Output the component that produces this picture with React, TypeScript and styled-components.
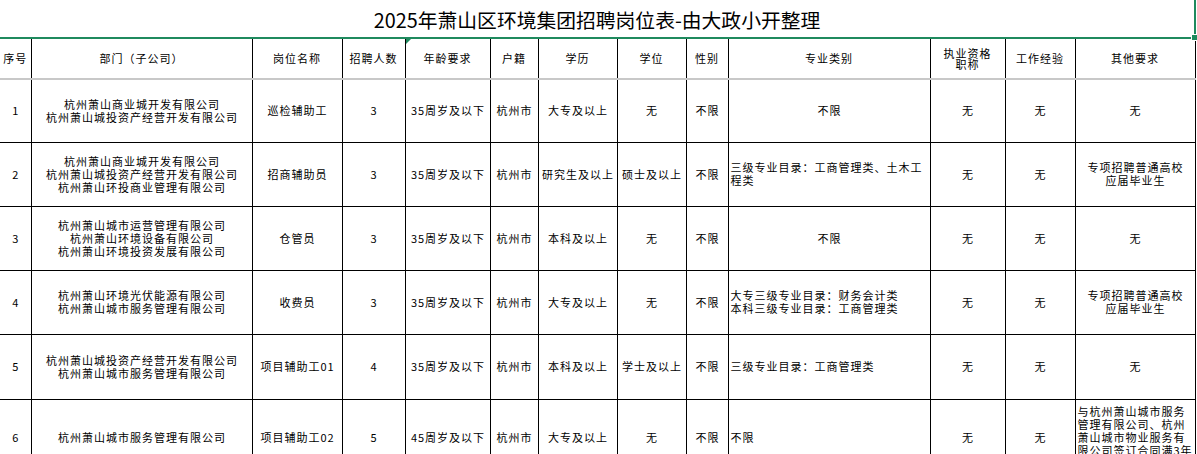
import React, { FC } from 'react';
import styled, { createGlobalStyle } from 'styled-components';

const green = '#1f8a5e';
const gridLine = '#000000';
const frozenLine = '#c8c8c8';

const GlobalStyle = createGlobalStyle`
  html, body {
    margin: 0;
    padding: 0;
    background: #ffffff;
    overflow: hidden;
  }
  body {
    font-family: "Noto Sans CJK SC", "Noto Sans", sans-serif;
    color: #000000;
  }
`;

const Sheet = styled.div`
  width: 1197px;
  height: 454px;
  overflow: hidden;
`;

const Table = styled.table`
  border-collapse: collapse;
  table-layout: fixed;
  width: 1197px;
`;

const Col = styled.col<{ $width: number }>`
  width: ${(p) => p.$width}px;
`;

const TitleCell = styled.td`
  position: relative;
  height: 34px;
  padding: 3px 0 0;
  border-bottom: 2px solid ${green};
  border-right: 2px solid ${green};
  font-size: 19.8px;
  line-height: 24px;
  text-align: center;
  vertical-align: middle;
  white-space: nowrap;
`;

const Handle = styled.span`
  position: absolute;
  right: -4px;
  bottom: -4px;
  width: 5px;
  height: 5px;
  background: ${green};
  border: 1px solid #ffffff;
`;

const HeadCell = styled.th`
  position: relative;
  height: 39px;
  padding: 0 1px;
  border-right: 1px solid ${gridLine};
  border-bottom: 2px solid ${frozenLine};
  font-size: 11px;
  font-weight: normal;
  letter-spacing: 1px;
  line-height: 11px;
  text-align: center;
  vertical-align: middle;
`;

const Marker = styled.span`
  position: absolute;
  left: 0;
  top: 0;
  width: 0;
  height: 0;
  border-top: 5px solid ${green};
  border-right: 5px solid transparent;
`;

const Cell = styled.td<{ $left?: boolean }>`
  padding: 0 1px 0 2px;
  border-right: 1px solid ${gridLine};
  border-bottom: 1px solid ${gridLine};
  font-size: 11px;
  letter-spacing: 1px;
  line-height: 13px;
  text-align: ${(p) => (p.$left ? 'left' : 'center')};
  vertical-align: middle;
  white-space: nowrap;
  overflow: hidden;
`;

const Row = styled.tr<{ $height: number }>`
  height: ${(p) => p.$height}px;
`;

const Blank = styled.td``;

const widths = [31, 221, 90, 63, 85, 48, 79, 69, 42, 202, 75, 70, 120, 2];

const headers = [
  ['序号'],
  ['部门（子公司）'],
  ['岗位名称'],
  ['招聘人数'],
  ['年龄要求'],
  ['户籍'],
  ['学历'],
  ['学位'],
  ['性别'],
  ['专业类别'],
  ['执业资格', '职称'],
  ['工作经验'],
  ['其他要求'],
];

interface IJob {
  no: number;
  companies: string[];
  title: string;
  count: number;
  age: string;
  degreeLevel: string;
  degree: string;
  major: string[];
  majorLeft: boolean;
  other: string[];
  otherLeft?: boolean;
  height: number;
}

const jobs: IJob[] = [
  {
    no: 1,
    companies: ['杭州萧山商业城开发有限公司', '杭州萧山城投资产经营开发有限公司'],
    title: '巡检辅助工',
    count: 3,
    age: '35周岁及以下',
    degreeLevel: '大专及以上',
    degree: '无',
    major: ['不限'],
    majorLeft: false,
    other: ['无'],
    height: 63,
  },
  {
    no: 2,
    companies: [
      '杭州萧山商业城开发有限公司',
      '杭州萧山城投资产经营开发有限公司',
      '杭州萧山环投商业管理有限公司',
    ],
    title: '招商辅助员',
    count: 3,
    age: '35周岁及以下',
    degreeLevel: '研究生及以上',
    degree: '硕士及以上',
    major: ['三级专业目录：工商管理类、土木工', '程类'],
    majorLeft: true,
    other: ['专项招聘普通高校', '应届毕业生'],
    height: 64,
  },
  {
    no: 3,
    companies: [
      '杭州萧山城市运营管理有限公司',
      '杭州萧山环境设备有限公司',
      '杭州萧山环境投资发展有限公司',
    ],
    title: '仓管员',
    count: 3,
    age: '35周岁及以下',
    degreeLevel: '本科及以上',
    degree: '无',
    major: ['不限'],
    majorLeft: false,
    other: ['无'],
    height: 64,
  },
  {
    no: 4,
    companies: ['杭州萧山环境光伏能源有限公司', '杭州萧山城市服务管理有限公司'],
    title: '收费员',
    count: 3,
    age: '35周岁及以下',
    degreeLevel: '大专及以上',
    degree: '无',
    major: ['大专三级专业目录：财务会计类', '本科三级专业目录：工商管理类'],
    majorLeft: true,
    other: ['专项招聘普通高校', '应届毕业生'],
    height: 64,
  },
  {
    no: 5,
    companies: ['杭州萧山城投资产经营开发有限公司', '杭州萧山城市服务管理有限公司'],
    title: '项目辅助工01',
    count: 4,
    age: '35周岁及以下',
    degreeLevel: '本科及以上',
    degree: '学士及以上',
    major: ['三级专业目录：工商管理类'],
    majorLeft: true,
    other: ['无'],
    height: 65,
  },
  {
    no: 6,
    companies: ['杭州萧山城市服务管理有限公司'],
    title: '项目辅助工02',
    count: 5,
    age: '45周岁及以下',
    degreeLevel: '大专及以上',
    degree: '无',
    major: ['不限'],
    majorLeft: true,
    other: [
      '与杭州萧山城市服务',
      '管理有限公司、杭州',
      '萧山城市物业服务有',
      '限公司签订合同满3年',
      '及以上的在职员工',
    ],
    otherLeft: true,
    height: 76,
  },
];

const Lines: FC<{ lines: string[] }> = ({ lines }) => (
  <>
    {lines.map((line, index) => (
      <React.Fragment key={index}>
        {index > 0 && <br />}
        {line}
      </React.Fragment>
    ))}
  </>
);

const App: FC = () => (
  <Sheet>
    <GlobalStyle />
    <Table>
      <colgroup>
        {widths.map((width, index) => (
          <Col key={index} $width={width} />
        ))}
      </colgroup>
      <tbody>
        <tr>
          <TitleCell colSpan={13}>
            2025年萧山区环境集团招聘岗位表-由大政小开整理
            <Handle />
          </TitleCell>
          <Blank />
        </tr>
        <tr>
          {headers.map((lines, index) => (
            <HeadCell key={index}>
              {index === 4 && <Marker />}
              <Lines lines={lines} />
            </HeadCell>
          ))}
          <Blank />
        </tr>
        {jobs.map((job) => (
          <Row key={job.no} $height={job.height}>
            <Cell>{job.no}</Cell>
            <Cell>
              <Lines lines={job.companies} />
            </Cell>
            <Cell>{job.title}</Cell>
            <Cell>{job.count}</Cell>
            <Cell>{job.age}</Cell>
            <Cell>杭州市</Cell>
            <Cell>{job.degreeLevel}</Cell>
            <Cell>{job.degree}</Cell>
            <Cell>不限</Cell>
            <Cell $left={job.majorLeft}>
              <Lines lines={job.major} />
            </Cell>
            <Cell>无</Cell>
            <Cell>无</Cell>
            <Cell $left={job.otherLeft}>
              <Lines lines={job.other} />
            </Cell>
            <Blank />
          </Row>
        ))}
      </tbody>
    </Table>
  </Sheet>
);

export default App;
